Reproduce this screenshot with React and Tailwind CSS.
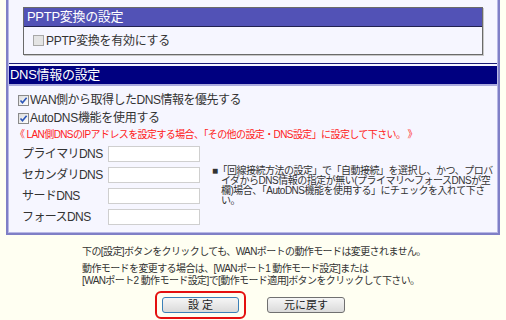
import React from "react";

const FONT = { fontFamily: '"Liberation Sans", "Noto Sans CJK JP", sans-serif' };

function Check({ checked, disabled }) {
  return (
    <span
      className={
        "inline-flex items-center justify-center w-[11px] h-[11px] border shrink-0 " +
        (disabled
          ? "border-[#a8a8a8] bg-[#e4e4e4]"
          : "border-[#8a8a8a] bg-gradient-to-br from-[#dcdcdc] to-[#ffffff]")
      }
    >
      {checked && (
        <svg width="9" height="9" viewBox="0 0 9 9">
          <path d="M1.5 4.5 L3.5 6.8 L7.6 1.8" fill="none" stroke="#2b55b8" strokeWidth="1.6" />
        </svg>
      )}
    </span>
  );
}

function DnsRow({ label }) {
  return (
    <div className="flex items-center h-[16px]">
      <span className="w-[86px] text-[12px] text-[#333] tracking-[-0.6px] whitespace-nowrap">{label}</span>
      <span className="w-[92px] h-[16px] bg-white border border-[#cfcfcf]" />
    </div>
  );
}

export default function App() {
  return (
    <div className="w-[506px] h-[320px] bg-[#fffff2] overflow-hidden" style={FONT}>
      {/* panel */}
      <div className="ml-[6px] w-[494px] border-x-2 border-b-2 border-[#7f7fc6]">
        <div className="border-x border-b border-[#b8b8e6] bg-[#f6f6ff] pb-[7px]">
          {/* PPTP box */}
          <div className="pt-[7px] px-[14px]">
            <div className="border border-[#6a6a6a] shadow-[1px_1px_0_#c8c8c8]">
              <div className="h-[19px] bg-[#5252b6] border-b border-[#222250] flex items-center pl-[3px] text-white text-[13px] tracking-[-0.3px]">
                PPTP変換の設定
              </div>
              <div className="h-[27px] flex items-center pl-[9px] gap-[2px] text-[12px] text-[#333] tracking-[-0.3px]">
                <Check disabled />
                <span>PPTP変換を有効にする</span>
              </div>
            </div>
          </div>

          {/* DNS section */}
          <div className="mt-[8px] border-t border-[#1c1c78] pt-[2px]">
            <div className="h-[18px] bg-[#000080] flex items-center pl-[1px] text-white text-[13px] tracking-[-0.3px]">
              DNS情報の設定
            </div>
            <div className="h-[2px] bg-[#aaaadd]" />
            <div className="pl-[9px] pt-[5px] text-[12px] text-[#333]">
              <div className="flex items-center gap-[1px] h-[18px] tracking-[-0.5px]">
                <Check checked />
                <span>WAN側から取得したDNS情報を優先する</span>
              </div>
              <div className="flex items-center gap-[1px] h-[18px] tracking-[-0.3px]">
                <Check checked />
                <span>AutoDNS機能を使用する</span>
              </div>
            </div>
            <div className="pl-[6px] mt-[-1px] h-[16px] flex items-center text-[10px] text-[#ff2020] tracking-[-0.6px] whitespace-nowrap">
              《 LAN側DNSのIPアドレスを設定する場合、「その他の設定・DNS設定」に設定して下さい。 》
            </div>
            <div className="flex items-center pl-[13px] mt-[4px]">
              <div className="flex flex-col gap-[5px]">
                <DnsRow label="プライマリDNS" />
                <DnsRow label="セカンダリDNS" />
                <DnsRow label="サードDNS" />
                <DnsRow label="フォースDNS" />
              </div>
              <div className="ml-[12px] text-[10px] leading-[10px] text-[#333] tracking-[-0.5px] whitespace-nowrap">
                <div>■「回線接続方法の設定」で「自動接続」を選択し、かつ、プロバ</div>
                <div className="pl-[9px]">イダからDNS情報の指定が無い(プライマリ〜フォースDNSが空</div>
                <div className="pl-[9px]">欄)場合、「AutoDNS機能を使用する」にチェックを入れて下さ</div>
                <div className="pl-[9px]">い。</div>
              </div>
            </div>
          </div>
        </div>
      </div>

      {/* bottom notes */}
      <div className="pl-[82px] pt-[11px] text-[10px] text-[#333] tracking-[-0.6px] whitespace-nowrap">
        <div className="leading-[12px]">下の[設定]ボタンをクリックしても、WANポートの動作モードは変更されません。</div>
        <div className="leading-[12px] mt-[5px]">動作モードを変更する場合は、[WANポート1 動作モード設定]または</div>
        <div className="leading-[12px]">[WANポート2 動作モード設定]で[動作モード適用]ボタンをクリックして下さい。</div>
      </div>

      <div className="flex items-center mt-[4px] pl-[155px] gap-[21px]">
        <div className="border-2 border-[#e41010] rounded-[6px] px-[5px] py-[4px]">
          <button className="w-[77px] h-[16px] rounded-[3px] border border-[#3b80b8] bg-gradient-to-b from-[#f6f6f6] to-[#dadada] text-[11px] text-[#222] leading-none flex items-center justify-center">
            設 定
          </button>
        </div>
        <button className="w-[78px] h-[16px] rounded-[3px] border border-[#707070] bg-gradient-to-b from-[#f6f6f6] to-[#dadada] text-[11px] text-[#222] leading-none flex items-center justify-center">
          元に戻す
        </button>
      </div>
    </div>
  );
}
